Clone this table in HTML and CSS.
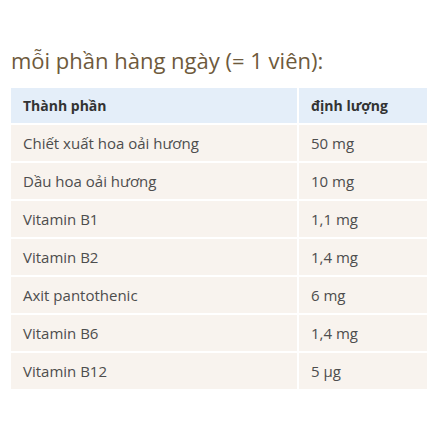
FILE: index.html
```html
<!DOCTYPE html>
<html lang="vi">
<head>
<meta charset="utf-8">
<link rel="stylesheet" href="styles.css">
</head>
<body>
<div class="page">
  <h2 class="title">mỗi phần hàng ngày (= 1 viên):</h2>
  <table class="nutri">
    <thead>
      <tr><th>Thành phần</th><th>định lượng</th></tr>
    </thead>
    <tbody>
      <tr><td>Chiết xuất hoa oải hương</td><td>50 mg</td></tr>
      <tr><td>Dầu hoa oải hương</td><td>10 mg</td></tr>
      <tr><td>Vitamin B1</td><td>1,1 mg</td></tr>
      <tr><td>Vitamin B2</td><td>1,4 mg</td></tr>
      <tr><td>Axit pantothenic</td><td>6 mg</td></tr>
      <tr><td>Vitamin B6</td><td>1,4 mg</td></tr>
      <tr><td>Vitamin B12</td><td>5 µg</td></tr>
    </tbody>
  </table>
</div>
</body>
</html>
```
FILE: styles.css
```css
html, body { margin: 0; padding: 0; background: #fff; }
body { font-family: "Open Sans", "Noto Sans", sans-serif; }
.page { padding: 44px 0 0 11px; }
.title {
  margin: 0 0 11px 0;
  font-weight: 400;
  font-size: 22px;
  line-height: 33px;
  color: #6e5a3c;
}
.nutri { border-collapse: separate; border-spacing: 0; width: 416px; table-layout: fixed; }
.nutri th, .nutri td {
  padding: 0 12px;
  text-align: left;
  border-bottom: 2px solid #fff;
  box-sizing: border-box;
  white-space: nowrap;
}
.nutri th { background: #e4eef9; color: #333; font-weight: 700; font-size: 14px; height: 37px; }
.nutri td { background: #f8f3ee; color: #4d4d4d; font-size: 15px; height: 38px; }
.nutri th:first-child, .nutri td:first-child { width: 288px; border-right: 2px solid #fff; }
```
